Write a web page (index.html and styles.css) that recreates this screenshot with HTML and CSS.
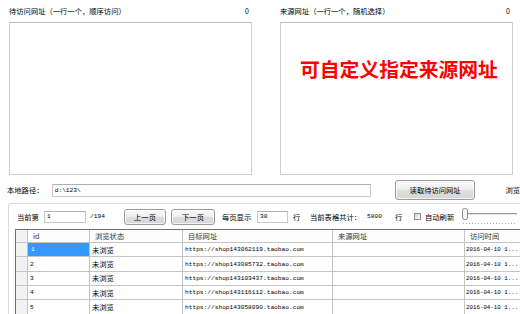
FILE: index.html
```html
<!DOCTYPE html>
<html lang="zh-CN">
<head>
<meta charset="utf-8">
<title>访问工具</title>
<link rel="stylesheet" href="styles.css">
</head>
<body>
<div class="app">
  <div class="top">
    <section class="pane pane-left">
      <div class="pane-head"><span>待访问网址（一行一个，顺序访问）</span><span class="count">0</span></div>
      <div class="box"></div>
    </section>
    <section class="pane pane-right">
      <div class="pane-head"><span>来源网址（一行一个，随机选择）</span><span class="count">0</span></div>
      <div class="box"><div class="promo">可自定义指定来源网址</div></div>
    </section>
  </div>

  <div class="path-row">
    <span class="path-label">本地路径：</span>
    <div class="field path-field mono">d:\123\</div>
    <button class="btn btn-read">读取待访问网址</button>
    <span class="browse">浏览</span>
  </div>

  <div class="group">
    <div class="pager">
      <span class="t-cur">当前第</span>
      <div class="field page-field mono">1</div>
      <span class="t-total mono">/194</span>
      <button class="btn btn-prev">上一页</button>
      <button class="btn btn-next">下一页</button>
      <span class="t-per">每页显示</span>
      <div class="field per-field mono">30</div>
      <span class="t-row1">行</span>
      <span class="t-sum">当前表格共计：</span>
      <span class="t-num mono">5800</span>
      <span class="t-row2">行</span>
      <span class="check"></span>
      <span class="t-auto">自动刷新</span>
      <svg class="slider" width="56" height="26" viewBox="0 0 56 26">
        <line x1="3" y1="9.5" x2="56" y2="9.5" stroke="#9a9a9a" stroke-width="1"/>
        <line x1="3" y1="10.5" x2="56" y2="10.5" stroke="#e4e4e4" stroke-width="1"/>
        <line x1="2" y1="19.5" x2="56" y2="19.5" stroke="#a8a8a8" stroke-width="1" stroke-dasharray="1 2"/>
        <rect x="1.5" y="4.5" width="5" height="11" rx="2" fill="#f4f4f4" stroke="#8a8a8a"/>
      </svg>
    </div>

    <div class="grid">
      <div class="rh"></div>
      <div class="hc">id</div>
      <div class="hc">浏览状态</div>
      <div class="hc">目标网址</div>
      <div class="hc">来源网址</div>
      <div class="hc">访问时间</div>

      <div class="rh"></div>
      <div class="c mono sel">1</div>
      <div class="c">未浏览</div>
      <div class="c mono">https://shop143062119.taobao.com</div>
      <div class="c"></div>
      <div class="c mono time">2016-04-10 1...</div>

      <div class="rh"></div>
      <div class="c mono">2</div>
      <div class="c">未浏览</div>
      <div class="c mono">https://shop143085732.taobao.com</div>
      <div class="c"></div>
      <div class="c mono time">2016-04-10 1...</div>

      <div class="rh"></div>
      <div class="c mono">3</div>
      <div class="c">未浏览</div>
      <div class="c mono">https://shop143103437.taobao.com</div>
      <div class="c"></div>
      <div class="c mono time">2016-04-10 1...</div>

      <div class="rh"></div>
      <div class="c mono">4</div>
      <div class="c">未浏览</div>
      <div class="c mono">https://shop143116112.taobao.com</div>
      <div class="c"></div>
      <div class="c mono time">2016-04-10 1...</div>

      <div class="rh"></div>
      <div class="c mono">5</div>
      <div class="c">未浏览</div>
      <div class="c mono">https://shop143058090.taobao.com</div>
      <div class="c"></div>
      <div class="c mono time">2016-04-10 1...</div>
    </div>
  </div>
</div>
</body>
</html>
```

FILE: styles.css
```css
* { box-sizing: border-box; }

html, body {
  margin: 0;
  padding: 0;
  background: #ffffff;
}

body {
  width: 520px;
  height: 314px;
  overflow: hidden;
  font-family: "Noto Sans CJK SC", "Noto Sans", sans-serif;
  font-size: 7.3px;
  color: #000;
}

.app {
  width: 520px;
  overflow: hidden;
}

.mono {
  font-family: "Liberation Mono", "DejaVu Sans Mono", monospace;
  font-size: 6.2px;
}

/* ---------- top panes ---------- */
.top {
  display: flex;
  gap: 28px;
  padding-left: 9px;
}

.pane-left { width: 243px; }
.pane-right { width: 233px; }

.pane-head {
  height: 22px;
  display: flex;
  align-items: center;
  justify-content: space-between;
  padding-right: 3px;
  padding-bottom: 1px;
  white-space: nowrap;
}

.count { font-size: 7px; }

.box {
  height: 153px;
  border: 1px solid #cfcfcf;
  border-top-color: #bdbdbd;
  background: #fff;
}

.promo {
  margin-top: 36px;
  padding-left: 19px;
  font-size: 19.8px;
  line-height: 20px;
  font-weight: 700;
  color: #ff0000;
  white-space: nowrap;
}

/* ---------- path row ---------- */
.path-row {
  margin-top: 5px;
  height: 20px;
  display: flex;
  align-items: center;
  padding-left: 7px;
  white-space: nowrap;
}

.path-label { width: 45px; }

.field {
  background: #fff;
  border: 1px solid #c8c8c8;
  border-top-color: #b0b0b0;
  display: flex;
  align-items: center;
  padding-left: 2px;
  color: #000;
}

.path-field {
  width: 321px;
  height: 13px;
}

.btn {
  font-family: "Noto Sans CJK SC", sans-serif;
  font-size: 7.3px;
  color: #000;
  padding: 0;
  border: 1px solid #9c9c9c;
  border-radius: 3px;
  background: linear-gradient(#fbfbfb 0%, #efefef 45%, #dddddd 55%, #d6d6d6 100%);
  box-shadow: inset 0 0 0 1px rgba(255,255,255,0.7);
  display: flex;
  align-items: center;
  justify-content: center;
}

.btn-read {
  margin-left: 24px;
  width: 81px;
  height: 20px;
}

.browse { margin-left: 30px; }

/* ---------- group ---------- */
.group {
  margin-top: 3px;
  margin-left: 8px;
  border-top: 1px solid #dadada;
  border-left: 1px solid #dadada;
  border-top-left-radius: 3px;
}

.pager {
  height: 25px;
  display: flex;
  align-items: center;
  padding-left: 8px;
  white-space: nowrap;
}

.t-cur { width: 27px; }
.page-field { width: 42px; height: 12px; }
.t-total { margin-left: 4px; width: 34px; }
.btn-prev { width: 42px; height: 16px; }
.btn-next { margin-left: 5px; width: 44px; height: 16px; }
.t-per { margin-left: 7px; width: 35px; }
.per-field { width: 31px; height: 12px; }
.t-row1 { margin-left: 5px; width: 17px; }
.t-sum { width: 57px; }
.t-num { width: 28px; }
.t-row2 { width: 19px; }

.check {
  width: 7px;
  height: 7px;
  border: 1px solid #8e8f8f;
  background: linear-gradient(135deg, #d8d8d8, #f8f8f8);
}

.t-auto { margin-left: 4px; width: 37px; }

.slider {
  display: block;
  margin-left: -1px;
  flex: none;
}

/* ---------- grid ---------- */
.grid {
  margin-left: 6px;
  display: grid;
  grid-template-columns: 12px 62px 93px 150px 132px 56px;
  grid-template-rows: 13px repeat(5, 14.35px);
  border-left: 1px solid #707070;
  border-top: 1px solid #707070;
  width: max-content;
}

.grid > div {
  border-right: 1px solid #c4c4c4;
  border-bottom: 1px solid #c4c4c4;
  display: flex;
  align-items: center;
  white-space: nowrap;
  overflow: hidden;
}

.rh { background: #f2f2f2; }

.hc {
  background: #fdfdfd;
  padding-left: 5px;
  color: #333;
}

.c {
  background: #fff;
  padding-left: 2px;
  color: #000;
}

.c.time {
  font-size: 5.8px;
  padding-left: 1px;
}

.c.sel {
  background: #3399ff;
  color: #fff;
  padding-left: 3px;
}
```
